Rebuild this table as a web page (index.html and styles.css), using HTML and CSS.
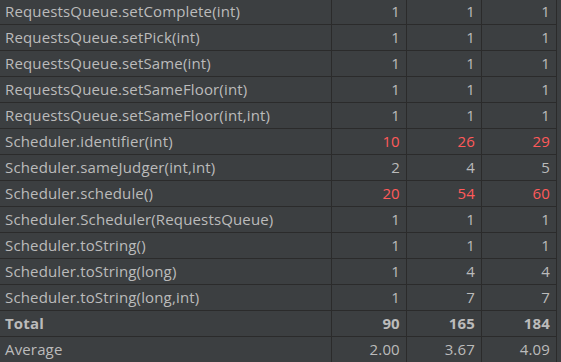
FILE: index.html
```html
<!DOCTYPE html>
<html>
<head>
<meta charset="utf-8">
<link rel="stylesheet" href="styles.css">
</head>
<body>
<div class="wrap">
<table class="metrics">
<colgroup><col class="c-name"><col class="c-num"><col class="c-num"><col class="c-num"></colgroup>
<tbody>
<tr><td>RequestsQueue.setComplete(int)</td><td class="n">1</td><td class="n">1</td><td class="n">1</td></tr>
<tr><td>RequestsQueue.setPick(int)</td><td class="n">1</td><td class="n">1</td><td class="n">1</td></tr>
<tr><td>RequestsQueue.setSame(int)</td><td class="n">1</td><td class="n">1</td><td class="n">1</td></tr>
<tr><td>RequestsQueue.setSameFloor(int)</td><td class="n">1</td><td class="n">1</td><td class="n">1</td></tr>
<tr><td>RequestsQueue.setSameFloor(int,int)</td><td class="n">1</td><td class="n">1</td><td class="n">1</td></tr>
<tr><td>Scheduler.identifier(int)</td><td class="n red">10</td><td class="n red">26</td><td class="n red">29</td></tr>
<tr><td>Scheduler.sameJudger(int,int)</td><td class="n">2</td><td class="n">4</td><td class="n">5</td></tr>
<tr><td>Scheduler.schedule()</td><td class="n red">20</td><td class="n red">54</td><td class="n red">60</td></tr>
<tr><td>Scheduler.Scheduler(RequestsQueue)</td><td class="n">1</td><td class="n">1</td><td class="n">1</td></tr>
<tr><td>Scheduler.toString()</td><td class="n">1</td><td class="n">1</td><td class="n">1</td></tr>
<tr><td>Scheduler.toString(long)</td><td class="n">1</td><td class="n">4</td><td class="n">4</td></tr>
<tr><td>Scheduler.toString(long,int)</td><td class="n">1</td><td class="n">7</td><td class="n">7</td></tr>
<tr class="total"><td>Total</td><td class="n">90</td><td class="n">165</td><td class="n">184</td></tr>
<tr><td>Average</td><td class="n">2.00</td><td class="n">3.67</td><td class="n">4.09</td></tr>
</tbody>
</table>
</div>
</body>
</html>
```
FILE: styles.css
```css
html, body {
  margin: 0;
  padding: 0;
  background: #3c3f41;
  overflow: hidden;
}
.wrap {
  margin-top: -2px;
  width: 561px;
}
.metrics {
  border-collapse: collapse;
  table-layout: fixed;
  width: 557px;
  font-family: "Open Sans", "Noto Sans", sans-serif;
  font-size: 15px;
  letter-spacing: 0.15px;
  color: #bbbbbb;
}
.c-name { width: 331px; }
.c-num { width: 75px; }
.metrics td {
  height: 25px;
  padding: 0 6px 0 5px;
  border-top: 1px solid #2b2b2b;
  border-bottom: 1px solid #2b2b2b;
  border-right: 1px solid #2b2b2b;
  white-space: nowrap;
  overflow: hidden;
  line-height: 25px;
  box-sizing: border-box;
}
.metrics td.n { text-align: right; }
.metrics td.red { color: #ff5a5a; }
.metrics tr.total td { font-weight: bold; }
```
